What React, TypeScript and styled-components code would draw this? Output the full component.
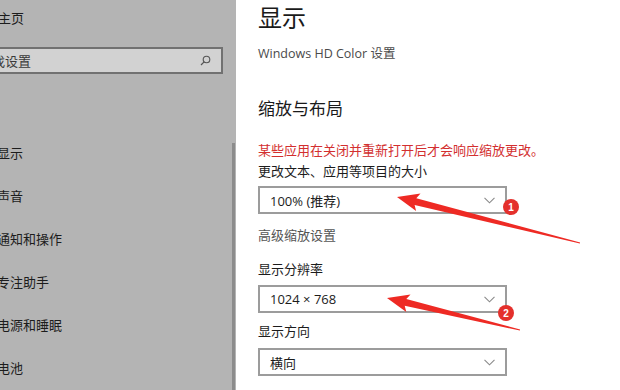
import styled, { createGlobalStyle } from "styled-components";

const GlobalStyle = createGlobalStyle`
  html, body {
    margin: 0;
    padding: 0;
    background: #ffffff;
  }
  body {
    font-family: "Noto Sans CJK SC", "Noto Sans", sans-serif;
  }
`;

const NAV = ["显示", "声音", "通知和操作", "专注助手", "电源和睡眠", "电池"];

type Pt = [number, number];

// builds a tapered annotation arrow from tail to tip
const arrowPoints = (tip: Pt, tail: Pt) => {
  const dx = tail[0] - tip[0];
  const dy = tail[1] - tip[1];
  const len = Math.hypot(dx, dy);
  const ux = dx / len;
  const uy = dy / len;
  const px = -uy;
  const py = ux;
  const headLen = 22;
  const headW = 9;
  const shaftW = 3.4;
  const bx = tip[0] + ux * headLen;
  const by = tip[1] + uy * headLen;
  const pts: Pt[] = [
    tip,
    [bx + px * headW, by + py * headW],
    [bx - ux * 3 + px * shaftW, by - uy * 3 + py * shaftW],
    [tail[0] + px * 0.6, tail[1] + py * 0.6],
    [tail[0] - px * 0.6, tail[1] - py * 0.6],
    [bx - ux * 3 - px * shaftW, by - uy * 3 - py * shaftW],
    [bx - px * headW, by - py * headW],
  ];
  return pts.map((p) => `${p[0].toFixed(1)},${p[1].toFixed(1)}`).join(" ");
};

const Chevron = () => (
  <svg width="11" height="7" viewBox="0 0 11 7">
    <path d="M0.5 0.8 L5.5 5.8 L10.5 0.8" fill="none" stroke="#8a8a8a" strokeWidth="1.1" />
  </svg>
);

const SearchIcon = () => (
  <svg width="11" height="11" viewBox="0 0 11 11">
    <circle cx="6.5" cy="4.5" r="3.3" fill="none" stroke="#555" strokeWidth="1.1" />
    <path d="M4.1 6.9 L1 10" stroke="#555" strokeWidth="1.2" />
  </svg>
);

const Select = ({ value }: { value: string }) => (
  <Dropdown>
    <span>{value}</span>
    <Chevron />
  </Dropdown>
);

export default function App() {
  return (
    <Page>
      <GlobalStyle />
      <Sidebar>
        <SideContent>
          <Home>主页</Home>
          <SearchBox>
            <span>查找设置</span>
            <SearchIcon />
          </SearchBox>
          <NavList>
            {NAV.map((n) => (
              <NavItem key={n}>{n}</NavItem>
            ))}
          </NavList>
        </SideContent>
        <ScrollTrack>
          <ScrollThumb />
        </ScrollTrack>
      </Sidebar>
      <Main>
        <Title>显示</Title>
        <LinkText>Windows HD Color 设置</LinkText>
        <Heading>缩放与布局</Heading>
        <Warning>某些应用在关闭并重新打开后才会响应缩放更改。</Warning>
        <Label $gap={1}>更改文本、应用等项目的大小</Label>
        <Field $gap={5}>
          <Select value="100% (推荐)" />
        </Field>
        <SubLink>高级缩放设置</SubLink>
        <Label $gap={14}>显示分辨率</Label>
        <Field $gap={6}>
          <Select value="1024 × 768" />
        </Field>
        <Label $gap={8}>显示方向</Label>
        <Field $gap={7}>
          <Select value="横向" />
        </Field>
      </Main>
      <Overlay width="620" height="390" viewBox="0 0 620 390">
        <polygon points={arrowPoints([397, 197], [580, 243])} fill="#ee2a24" />
        <polygon points={arrowPoints([387, 298], [520, 330])} fill="#ee2a24" />
        <circle cx="511" cy="207" r="8" fill="#e4302c" />
        <text x="511" y="211" fontSize="10" fontWeight="700" fill="#fff" textAnchor="middle" fontFamily="Liberation Sans, sans-serif">1</text>
        <circle cx="506" cy="313" r="8" fill="#e4302c" />
        <text x="506" y="317" fontSize="10" fontWeight="700" fill="#fff" textAnchor="middle" fontFamily="Liberation Sans, sans-serif">2</text>
      </Overlay>
    </Page>
  );
}

const Page = styled.div`
  position: relative;
  display: flex;
  width: 620px;
  height: 390px;
  overflow: hidden;
  background: #ffffff;
`;

const Sidebar = styled.aside`
  display: flex;
  width: 236px;
  flex-shrink: 0;
  background: #b4b4b4;
`;

const SideContent = styled.div`
  flex: 1;
  display: flex;
  flex-direction: column;
  overflow: hidden;
`;

const Home = styled.div`
  margin: 8px 0 0 -2px;
  font-size: 13px;
  line-height: 20px;
  color: #1c1c1c;
`;

const SearchBox = styled.div`
  display: flex;
  align-items: center;
  justify-content: space-between;
  box-sizing: border-box;
  margin: 19px 0 0 -25px;
  width: 248px;
  height: 27px;
  padding: 0 10px 0 2px;
  border: 2px solid #717171;
  background: #d2d2d2;
  font-size: 13px;
  color: #3a3a3a;
`;

const NavList = styled.div`
  display: flex;
  flex-direction: column;
  margin-top: 57px;
`;

const NavItem = styled.div`
  height: 43px;
  line-height: 43px;
  margin-left: -3px;
  font-size: 13px;
  color: #1c1c1c;
  white-space: nowrap;
`;

const ScrollTrack = styled.div`
  width: 4px;
  display: flex;
  flex-direction: column;
`;

const ScrollThumb = styled.div`
  width: 3px;
  margin-top: 143px;
  flex: 1;
  background: #8c8c8c;
`;

const Main = styled.main`
  flex: 1;
  display: flex;
  flex-direction: column;
  padding-left: 22px;
`;

const Title = styled.h1`
  margin: 0;
  font-size: 24px;
  font-weight: 400;
  line-height: 34px;
  color: #1a1a1a;
`;

const LinkText = styled.div`
  margin-top: 10px;
  font-family: "Open Sans", "Noto Sans CJK SC", sans-serif;
  font-size: 12.5px;
  line-height: 20px;
  color: #4a4a4a;
`;

const Heading = styled.h2`
  margin: 32px 0 0;
  font-size: 17px;
  font-weight: 400;
  line-height: 24px;
  color: #1a1a1a;
`;

const Warning = styled.div`
  margin-top: 20px;
  font-size: 13px;
  line-height: 20px;
  color: #d32f2f;
`;

const Label = styled.div<{ $gap: number }>`
  margin-top: ${(p) => p.$gap}px;
  font-size: 13px;
  line-height: 20px;
  color: #1c1c1c;
`;

const SubLink = styled.div`
  margin-top: 11px;
  font-size: 13px;
  line-height: 20px;
  color: #555555;
`;

const Field = styled.div<{ $gap: number }>`
  margin-top: ${(p) => p.$gap}px;
`;

const Dropdown = styled.div`
  display: flex;
  align-items: center;
  justify-content: space-between;
  box-sizing: border-box;
  width: 249px;
  height: 28px;
  padding: 0 10px 0 10px;
  border: 2px solid #9c9c9c;
  font-family: "Open Sans", "Noto Sans CJK SC", sans-serif;
  font-size: 13px;
  color: #1c1c1c;
`;

const Overlay = styled.svg`
  position: absolute;
  left: 0;
  top: 0;
  pointer-events: none;
`;
